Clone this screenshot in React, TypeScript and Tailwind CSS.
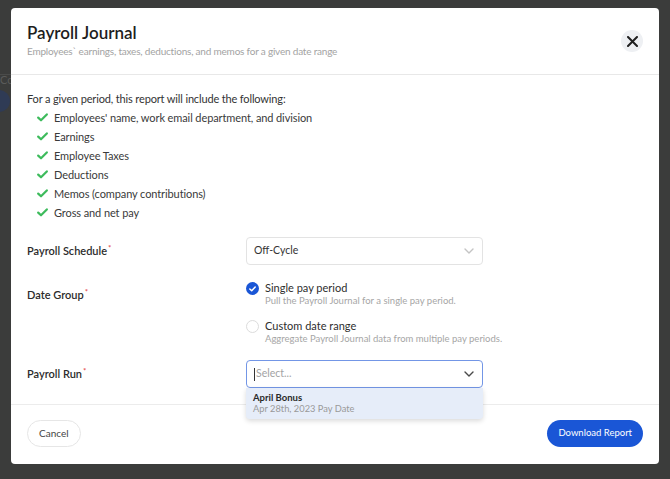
import React from 'react';

const items = [
  "Employees' name, work email department, and division",
  'Earnings',
  'Employee Taxes',
  'Deductions',
  'Memos (company contributions)',
  'Gross and net pay',
];

const Check = () => (
  <svg width="11" height="9" viewBox="0 0 11 9" className="shrink-0">
    <path d="M1.2 4.6 L4 7.3 L9.8 1.4" fill="none" stroke="#3dbb5c" strokeWidth="2.2" strokeLinecap="round" strokeLinejoin="round" />
  </svg>
);

const Chevron = ({ color }: { color: string }) => (
  <svg width="10" height="6" viewBox="0 0 10 6">
    <path d="M1 1 L5 5 L9 1" fill="none" stroke={color} strokeWidth="1.4" strokeLinecap="round" strokeLinejoin="round" />
  </svg>
);

const Label = ({ children }: { children: React.ReactNode }) => (
  <div className="w-[219px] shrink-0 text-[11px] leading-[28px] font-semibold text-[#2b2b2b]">
    {children}
    <sup className="text-[#e5484d] text-[8px] ml-[1px]">*</sup>
  </div>
);

const RadioOption = ({ checked, title, hint }: { checked?: boolean; title: string; hint: string }) => (
  <div className="flex gap-[6px]">
    {checked ? (
      <div className="w-[13px] h-[13px] mt-[1px] shrink-0 rounded-full bg-[#1a56d6] flex items-center justify-center">
        <svg width="7" height="6" viewBox="0 0 7 6">
          <path d="M0.8 3 L2.7 4.8 L6.2 1" fill="none" stroke="white" strokeWidth="1.5" strokeLinecap="round" strokeLinejoin="round" />
        </svg>
      </div>
    ) : (
      <div className="w-[13px] h-[13px] mt-[1px] shrink-0 rounded-full border border-[#dcdcdc] bg-white" />
    )}
    <div>
      <div className="text-[11px] leading-[14px] text-[#2e2e2e]">{title}</div>
      <div className="text-[9.5px] leading-[12px] text-[#a6a6a6]">{hint}</div>
    </div>
  </div>
);

export default function App() {
  return (
    <div
      className="relative w-[670px] h-[479px] overflow-hidden bg-[#3b3c3b] pt-[8px] pl-[11px]"
      style={{ fontFamily: 'Lato, "Open Sans", sans-serif' }}
    >
      {/* page behind the overlay */}
      <div className="absolute left-0 top-[74px] w-[11px] border-t border-[#4a4b4a]" />
      <span className="absolute left-0 top-[72px] text-[11px] text-[#5a5b5a]">Co</span>
      <div className="absolute left-[-12px] top-[90px] w-[22px] h-[22px] rounded-full bg-[#2f3b55]" />

      <div className="relative w-[648px] h-[456px] bg-white rounded-[4px] flex flex-col">
        {/* Header */}
        <div className="h-[67px] shrink-0 flex justify-between px-4 border-b border-[#e8e8e8]">
          <div className="pt-[14px]">
            <div className="text-[17px] leading-[22px] font-semibold text-[#1e1e1e]">Payroll Journal</div>
            <div className="text-[10px] leading-[14px] tracking-[-0.2px] text-[#a3a3a3]">
              Employees` earnings, taxes, deductions, and memos for a given date range
            </div>
          </div>
          <button className="self-center w-[22px] h-[22px] rounded-full bg-[#eef0f3] flex items-center justify-center">
            <svg width="11" height="11" viewBox="0 0 11 11">
              <path d="M1 1 L10 10 M10 1 L1 10" stroke="#1f1f1f" strokeWidth="2" strokeLinecap="round" />
            </svg>
          </button>
        </div>

        {/* Body */}
        <div className="flex-1 px-4 pt-[16px]">
          <div className="text-[11px] leading-[16px] tracking-[-0.15px] text-[#333]">
            For a given period, this report will include the following:
          </div>
          <ul className="pl-[10px] pt-[1px]">
            {items.map((t) => (
              <li key={t} className="flex items-center gap-[6px] text-[11px] leading-[19px] tracking-[-0.1px] text-[#3a3a3a]">
                <Check />
                {t}
              </li>
            ))}
          </ul>

          <div className="flex mt-[15px]">
            <Label>Payroll Schedule</Label>
            <div className="w-[237px] h-[28px] border border-[#e3e3e3] rounded-[4px] flex items-center justify-between pl-[7px] pr-[8px] text-[10.5px] text-[#333]">
              Off-Cycle
              <Chevron color="#c4c4c4" />
            </div>
          </div>

          <div className="flex mt-[16px]">
            <Label>Date Group</Label>
            <div className="flex flex-col gap-[12px]">
              <RadioOption checked title="Single pay period" hint="Pull the Payroll Journal for a single pay period." />
              <RadioOption title="Custom date range" hint="Aggregate Payroll Journal data from multiple pay periods." />
            </div>
          </div>

          <div className="flex mt-[15px]">
            <Label>Payroll Run</Label>
            <div className="relative">
              <div className="w-[237px] h-[28px] border border-[#7396e6] rounded-[4px] flex items-center justify-between pl-[7px] pr-[8px] text-[10.5px] text-[#a3a3a3]">
                <span className="flex items-center">
                  <span className="w-px h-[13px] bg-[#333] mr-[1px]" />
                  Select...
                </span>
                <Chevron color="#4a4a4a" />
              </div>
              <div className="absolute z-10 left-0 top-[28px] w-[237px] h-[31px] bg-[#e6edf9] rounded-b-[4px] shadow-[0_2px_5px_rgba(0,0,0,0.15)] pl-[7px] pt-[4px]">
                <div className="text-[9.5px] leading-[11px] font-bold text-[#2a2a2a]">April Bonus</div>
                <div className="text-[9.3px] leading-[11px] text-[#9a9a9a]">Apr 28th, 2023 Pay Date</div>
              </div>
            </div>
          </div>
        </div>

        {/* Footer */}
        <div className="h-[60px] shrink-0 border-t border-[#ececec] flex items-center justify-between px-4 pb-[2px]">
          <button className="h-[27px] px-[11px] rounded-full border border-[#e6e6e6] text-[10px] text-[#444]">
            Cancel
          </button>
          <button className="h-[27px] px-[11px] rounded-full bg-[#1a56d6] text-[9.5px] text-white">
            Download Report
          </button>
        </div>
      </div>
    </div>
  );
}
